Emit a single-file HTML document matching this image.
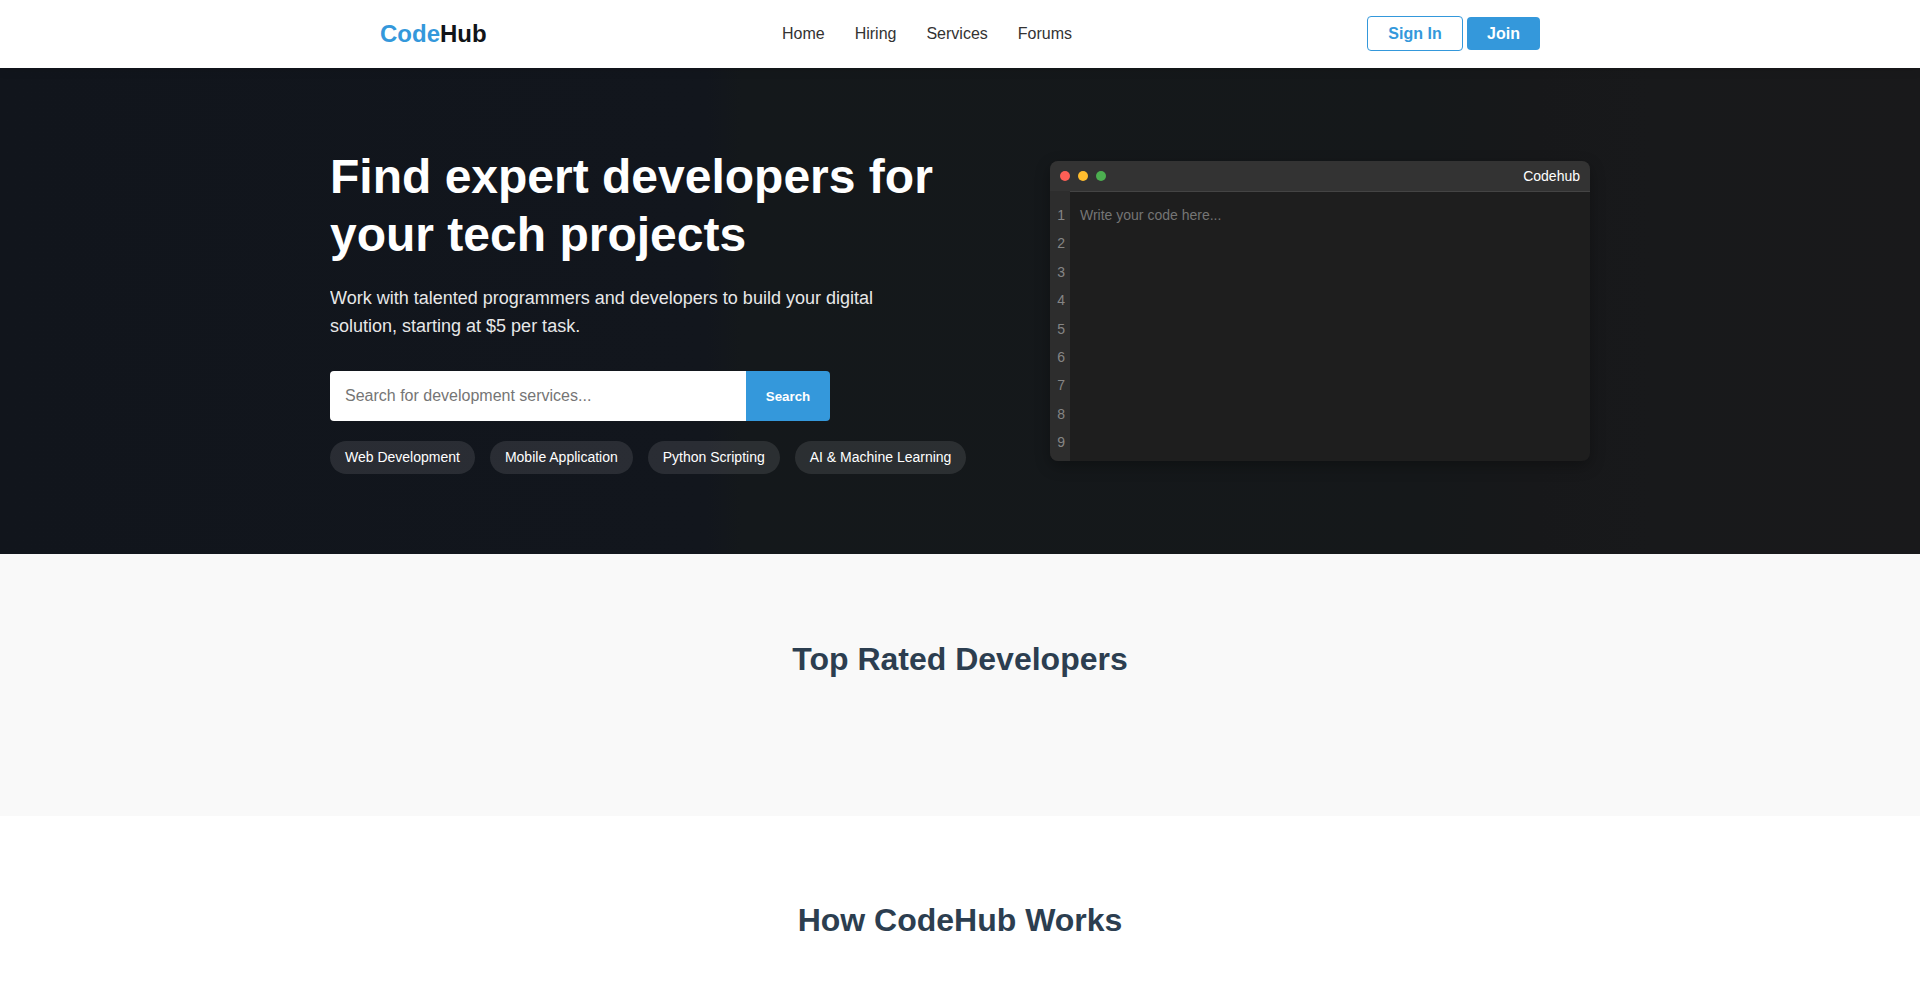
<!DOCTYPE html>
<html lang="en">
<head>
<meta charset="utf-8">
<title>CodeHub</title>
<style>
*{box-sizing:border-box;margin:0;padding:0}
html,body{width:1920px;height:993px;overflow:hidden;background:#fff}
body{font-family:"Liberation Sans",Arial,sans-serif;color:#333;line-height:1.6}
header{height:68px;background:#fff;position:relative;z-index:2;box-shadow:0 2px 10px rgba(0,0,0,.1)}
.hc{width:1200px;margin:0 auto;padding:0 20px;height:68px;display:flex;align-items:center;justify-content:space-between}
.logo{font-size:24px;font-weight:700;color:#111418;line-height:1}
.logo span{color:#3498db}
nav{display:flex;gap:30px}
nav a{font-size:16px;color:#333;text-decoration:none}
.btns{display:flex;gap:4.45px;align-items:center}
.btn{position:relative;top:-1px;font-size:16px;font-weight:700;padding:2px 20px 0;border-radius:4px;height:35px;display:flex;align-items:center;line-height:1}
.btn.o{border:1px solid #3498db;color:#3498db;background:#fff}
.btn.f{background:#3498db;color:#fff;height:33px}
.hero{padding:80px 0;background:linear-gradient(90deg,#11151c 0%,#12161d 36.8%,#14181b 38.6%,#15181a 74%,#17181a 80%,#18191b 86%,#19191b 100%);position:relative}
.hero .c{width:1300px;margin:0 auto;padding:0 20px;display:flex;align-items:center;gap:60px}
.left{flex:1;min-width:0}
h1{font-size:48px;line-height:1.2;font-weight:700;color:#fff;margin-bottom:20px}
.sub{font-size:18px;line-height:1.6;color:#fff;opacity:.9;max-width:600px;margin-bottom:30px}
.l1{position:relative;top:1px}
.search{width:500px;height:50px;display:flex;border-radius:4px;overflow:hidden;margin-bottom:20px}
.search .in{flex:1;background:#fff;color:#757575;font-size:16px;padding:0 15px;display:flex;align-items:center;line-height:normal}
.search .b{width:84px;background:#3498db;color:#fff;font-weight:700;font-size:13.33px;display:flex;align-items:center;justify-content:center;line-height:normal;padding-top:2px}
.tags{display:flex;gap:15px}
.tag{height:33px;border-radius:20px;background:rgba(255,255,255,.1);color:#fff;font-size:14px;padding:0 15px;display:flex;align-items:center;white-space:nowrap;line-height:normal}
.ed{position:relative;flex:0 0 540px;width:540px;height:300px;border-radius:8px;overflow:hidden;background:#1e1e1e;box-shadow:0 5px 15px rgba(0,0,0,.3)}
.ed .h{height:31px;background:#333;display:flex;align-items:center;padding:0 10px;border-bottom:1px solid #444}
.dot{width:10px;height:10px;border-radius:50%;margin-right:8px}
.ed .t{margin-left:auto;color:#fff;font-size:14px}
.ln{position:absolute;left:0;top:30px;width:20px;bottom:0;background:#2d2d2d;color:#858585;font-size:14px;text-align:right;padding:10px 5px 0 0}
.ln div{height:28.4px;line-height:28.4px}
.ph{position:absolute;left:30px;top:40px;color:#757575;font-size:14px;line-height:28.4px}
.s1{height:262px;background:#f9f9f9;text-align:center}
h2{font-size:32px;font-weight:700;color:#2c3e50;line-height:1}
.s1 h2{padding-top:89px}
.s2{text-align:center}
.s2 h2{padding-top:88px}
</style>
</head>
<body>
<header><div class="hc">
<div class="logo"><span>Code</span>Hub</div>
<nav><a>Home</a><a>Hiring</a><a>Services</a><a>Forums</a></nav>
<div class="btns"><div class="btn o">Sign In</div><div class="btn f">Join</div></div>
</div></header>
<section class="hero"><div class="c"><div class="left">
<h1>Find expert developers for your tech projects</h1>
<p class="sub"><span class="l1">Work with talented programmers and developers to build your digital</span> solution, starting at $5 per task.</p>
<div class="search"><div class="in">Search for development services...</div><div class="b">Search</div></div>
<div class="tags"><div class="tag">Web Development</div><div class="tag">Mobile Application</div><div class="tag">Python Scripting</div><div class="tag">AI &amp; Machine Learning</div></div>
</div>
<div class="ed">
<div class="h"><div class="dot" style="background:#ff5f56"></div><div class="dot" style="background:#ffbd2e"></div><div class="dot" style="background:#4caf50"></div><div class="t">Codehub</div></div>
<div class="ln"><div>1</div><div>2</div><div>3</div><div>4</div><div style="position:relative;top:1px">5</div><div>6</div><div>7</div><div>8</div><div>9</div></div>
<div class="ph">Write your code here...</div>
</div>
</div></section>
<section class="s1"><h2>Top Rated Developers</h2></section>
<section class="s2"><h2>How CodeHub Works</h2></section>
</body>
</html>
